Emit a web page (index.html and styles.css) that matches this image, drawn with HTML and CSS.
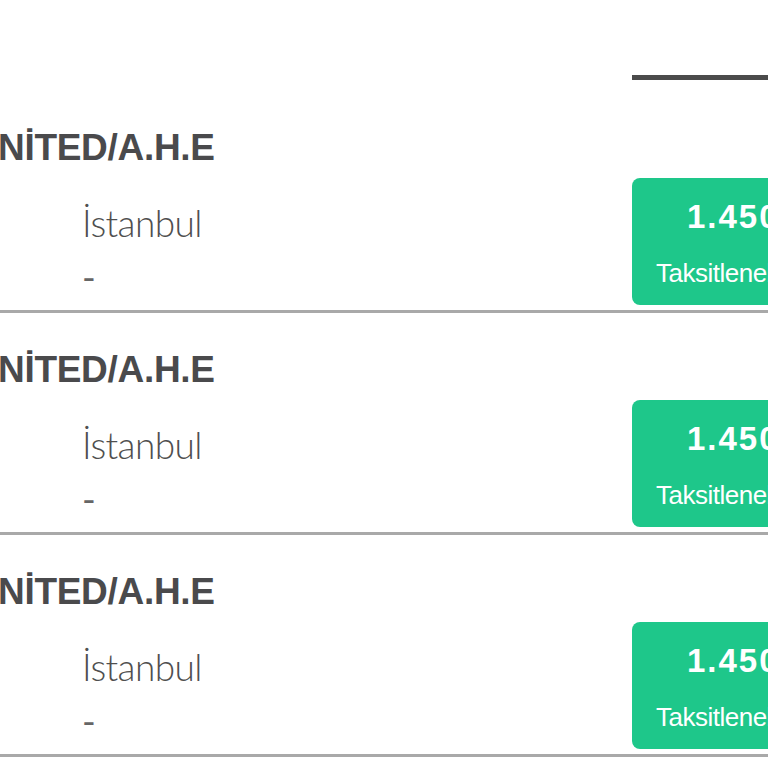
FILE: index.html
```html
<!DOCTYPE html>
<html lang="tr">
<head>
    <meta charset="UTF-8">
    <meta name="viewport" content="width=device-width, initial-scale=1.0">
    <title>Maç Listesi</title>
    <link rel="stylesheet" href="styles.css">
</head>
<body>

    <div class="page">
        <div class="tabs">
            <div class="tab-active"></div>
        </div>

        <div class="match-row">
            <div class="match-info">
                <h3 class="match-title">NİTED/A.H.E</h3>
                <div class="match-place">İstanbul</div>
                <div class="match-note">-</div>
            </div>
            <div class="price-box">
                <div class="price">1.450 TL</div>
                <div class="price-label">Taksitlenebilir</div>
            </div>
        </div>

        <div class="match-row">
            <div class="match-info">
                <h3 class="match-title">NİTED/A.H.E</h3>
                <div class="match-place">İstanbul</div>
                <div class="match-note">-</div>
            </div>
            <div class="price-box">
                <div class="price">1.450 TL</div>
                <div class="price-label">Taksitlenebilir</div>
            </div>
        </div>

        <div class="match-row">
            <div class="match-info">
                <h3 class="match-title">NİTED/A.H.E</h3>
                <div class="match-place">İstanbul</div>
                <div class="match-note">-</div>
            </div>
            <div class="price-box">
                <div class="price">1.450 TL</div>
                <div class="price-label">Taksitlenebilir</div>
            </div>
        </div>
    </div>

</body>
</html>
```

FILE: styles.css
```css
html, body {
    overflow: hidden;
}

body {
    font-family: "Liberation Sans", Arial, sans-serif;
    background: #ffffff;
    margin: 0;
    padding: 0;
}

.page {
    width: 872px;
}

.tabs {
    display: flex;
    justify-content: flex-end;
    padding-top: 75px;
    padding-bottom: 11px;
}

.tab-active {
    width: 240px;
    height: 5px;
    background: #4b4b4b;
}

.match-row {
    display: flex;
    height: 222px;
    box-sizing: border-box;
    border-bottom: 3px solid #a9a9a9;
}

.match-info {
    flex: 1;
    padding-top: 35px;
}

.match-title {
    margin: 0 0 0 -2px;
    font-size: 37px;
    line-height: 44px;
    font-weight: bold;
    letter-spacing: -0.3px;
    color: #4a4a4c;
}

.match-place,
.match-note {
    font-family: Lato, "Liberation Sans", sans-serif;
    font-weight: 300;
    font-size: 37px;
    line-height: 44px;
    letter-spacing: -0.6px;
    color: #4f4f4f;
    padding-left: 82px;
}

.match-place {
    margin-top: 31px;
}

.match-note {
    margin-top: 10px;
    font-weight: 400;
    color: #666666;
}

.price-box {
    flex-shrink: 0;
    width: 240px;
    height: 127px;
    margin-top: 87px;
    box-sizing: border-box;
    padding-top: 20px;
    background: #1ec78a;
    border-radius: 8px;
    color: #ffffff;
    white-space: nowrap;
    overflow: hidden;
}

.price {
    font-size: 33px;
    line-height: 38px;
    font-weight: bold;
    letter-spacing: 2px;
    padding-left: 55px;
}

.price-label {
    font-size: 26px;
    line-height: 32px;
    letter-spacing: -0.5px;
    margin-top: 21px;
    padding-left: 24px;
}
```
